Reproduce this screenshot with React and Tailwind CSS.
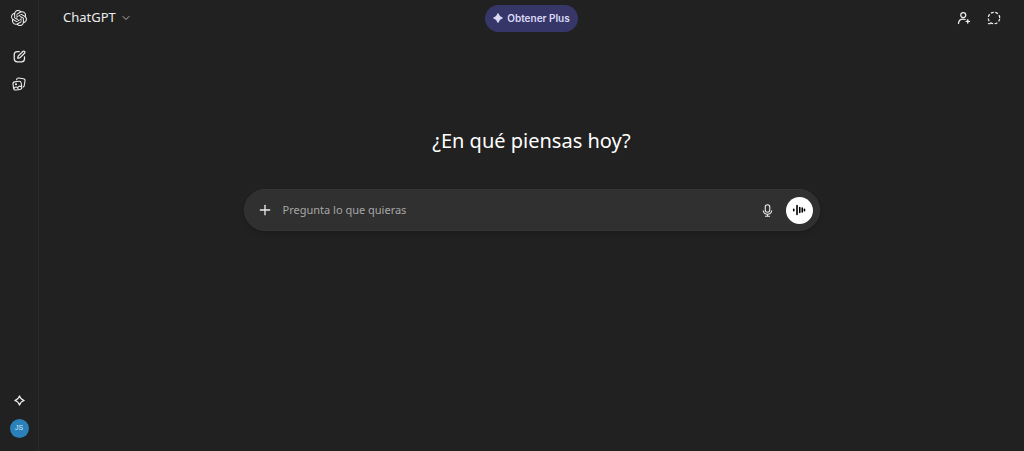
import React, { useState } from "react";
import { SiOpenai } from "react-icons/si";
import { ChevronDown, Plus } from "lucide-react";

const ComposeIcon = () => (
  <svg width="13" height="13" viewBox="0 0 26 26" fill="none" stroke="currentColor" strokeWidth="2.5" strokeLinecap="round" strokeLinejoin="round" aria-hidden="true">
    <path d="M12.500 3H8.500C4.500 3 2.500 5 2.500 9v8.500c0 4 2 6 6 6H17c4 0 6-2 6-6v-4" />
    <path d="M9.500 16.500l.8-4.200 9.300-9.300c1.100-1.100 2.700-1.100 3.600-.2s.9 2.500-.2 3.600l-9.300 9.300z" />
  </svg>
);

const ImagesIcon = () => (
  <svg width="14" height="14" viewBox="0 0 28 28" fill="none" stroke="currentColor" strokeWidth="2.2" strokeLinecap="round" strokeLinejoin="round" aria-hidden="true">
    <path d="M9 5.500l.5-1A3.400 3.400 0 0 1 13.200 2l9.800 1.500A3.500 3.500 0 0 1 26 7.500l-1.500 9.500A3.500 3.500 0 0 1 22.500 20" />
    <rect x="2.500" y="9" width="16.500" height="16.500" rx="4" transform="rotate(-8 11 17)" />
    <circle cx="8" cy="14.500" r="1" fill="currentColor" />
    <path d="M4 22.500c4-4 6-3 8.500 1.500M12 20.500c2-3 4-3 7-1" />
  </svg>
);

const SparkleIcon = ({ size, filled }) => (
  <svg width={size} height={size} viewBox="0 0 20 20" fill={filled ? "currentColor" : "none"} stroke="currentColor" strokeWidth="2.2" strokeLinejoin="round" aria-hidden="true">
    <path d="M10 1.500C11.300 6.200 13.800 8.700 18.500 10C13.800 11.300 11.300 13.800 10 18.500C8.700 13.800 6.200 11.300 1.500 10C6.200 8.700 8.700 6.200 10 1.500Z" />
  </svg>
);

const InviteIcon = () => (
  <svg width="14" height="14" viewBox="0 0 28 28" fill="none" stroke="currentColor" strokeWidth="2.500" strokeLinecap="round" aria-hidden="true">
    <circle cx="12.500" cy="8" r="5" />
    <path d="M3 25c.3-5.500 3.800-9 9-9 1.600 0 3 .3 4.200.9" />
    <path d="M21.500 17.500v6.500M18.300 20.800h6.500" strokeWidth="2.800" />
  </svg>
);

const TemporaryIcon = () => (
  <svg width="14" height="14" viewBox="0 0 28 28" fill="none" stroke="currentColor" strokeWidth="2.500" aria-hidden="true">
    <circle cx="14" cy="14" r="11.500" pathLength="80" strokeDasharray="6.500 3.500" strokeDashoffset="-1.700" />
    <path d="M3 25h3.500" strokeLinecap="round" />
  </svg>
);

const MicIcon = () => (
  <svg width="13" height="13" viewBox="0 0 26 26" fill="none" stroke="currentColor" strokeWidth="2.200" strokeLinecap="round" aria-hidden="true">
    <rect x="8.500" y="1.500" width="9" height="15" rx="4.500" />
    <path d="M4.500 13.500c.8 4.200 4 7 8.500 7s7.700-2.800 8.500-7M13 20.500v4M9 24.500h8" />
  </svg>
);

const VoiceIcon = () => (
  <svg width="14" height="14" viewBox="0 0 28 28" fill="none" stroke="currentColor" strokeWidth="3.200" strokeLinecap="round" aria-hidden="true">
    <path d="M3.500 12.500v3M10 5v18M15.500 9v10M20.500 10v8M25 12.500v3" />
  </svg>
);

const NAV_ITEMS = [
  { label: "Nuevo chat", icon: <ComposeIcon /> },
  { label: "Biblioteca", icon: <ImagesIcon /> },
];

function Sidebar() {
  return (
    <aside className="flex w-[39px] shrink-0 flex-col items-center border-r border-[#292929] pb-[13px]">
      <a href="#" aria-label="Inicio" className="flex h-9 items-center">
        <SiOpenai size={16} />
      </a>
      <nav className="mt-[7px] flex flex-col">
        {NAV_ITEMS.map((item) => (
          <button key={item.label} aria-label={item.label} className="flex h-[27px] w-7 items-center justify-center rounded-md hover:bg-white/10">
            {item.icon}
          </button>
        ))}
      </nav>
      <div className="mt-auto flex flex-col items-center gap-[9px]">
        <button aria-label="Mejorar plan" className="flex h-5 w-7 items-center justify-center">
          <SparkleIcon size={11} />
        </button>
        <button className="flex size-[19px] items-center justify-center rounded-full bg-[#2a80b9] font-['Liberation_Sans',sans-serif] text-[7px] text-blue-100">
          JS
        </button>
      </div>
    </aside>
  );
}

function Header() {
  return (
    <header className="grid h-9 grid-cols-3 items-center px-6">
      <button className="flex items-center gap-1 justify-self-start text-[13px]">
        ChatGPT <ChevronDown size={12} className="text-[#b4b4b4]" />
      </button>
      <button className="flex h-[27px] items-center gap-1 justify-self-center rounded-full bg-[#373669] px-2 font-[Inter,sans-serif] text-[10px] font-semibold text-[#dcdbf6]">
        <SparkleIcon size={10} filled /> Obtener Plus
      </button>
      <div className="-mr-[9px] flex justify-self-end">
        <button aria-label="Iniciar un chat grupal" className="flex size-[30px] items-center justify-center">
          <InviteIcon />
        </button>
        <button aria-label="Chat temporal" className="flex size-[30px] items-center justify-center">
          <TemporaryIcon />
        </button>
      </div>
    </header>
  );
}

function Composer() {
  const [prompt, setPrompt] = useState("");

  return (
    <form
      onSubmit={(e) => e.preventDefault()}
      className="flex h-[42px] w-full max-w-xl items-center rounded-full border border-[#353535] bg-[#303030] pr-[6px] pl-[10px] shadow-md shadow-black/10"
    >
      <button type="button" aria-label="Añadir" className="flex size-5 items-center justify-center">
        <Plus size={16} strokeWidth={2} />
      </button>
      <input
        aria-label="Pregunta lo que quieras"
        placeholder="Pregunta lo que quieras"
        value={prompt}
        onChange={(e) => setPrompt(e.target.value)}
        className="ml-2 min-w-0 flex-1 bg-transparent text-[11px] outline-none placeholder:text-[#a6a6a6]"
      />
      <button type="button" aria-label="Dictar" className="mr-2 flex size-5 items-center justify-center">
        <MicIcon />
      </button>
      <button type="button" aria-label="Modo de voz" className="flex size-[27px] items-center justify-center rounded-full bg-white text-black">
        <VoiceIcon />
      </button>
    </form>
  );
}

export default function App() {
  return (
    <div className="flex min-h-screen bg-[#212121] font-['Noto_Sans','Open_Sans',sans-serif] text-[#ececec]">
      <Sidebar />
      <div className="flex min-w-0 flex-1 flex-col">
        <Header />
        <main className="flex flex-1 flex-col items-center px-4 pt-[90px]">
          <h1 className="mb-[33px] text-xl leading-[30px] text-white">¿En qué piensas hoy?</h1>
          <Composer />
        </main>
      </div>
    </div>
  );
}
